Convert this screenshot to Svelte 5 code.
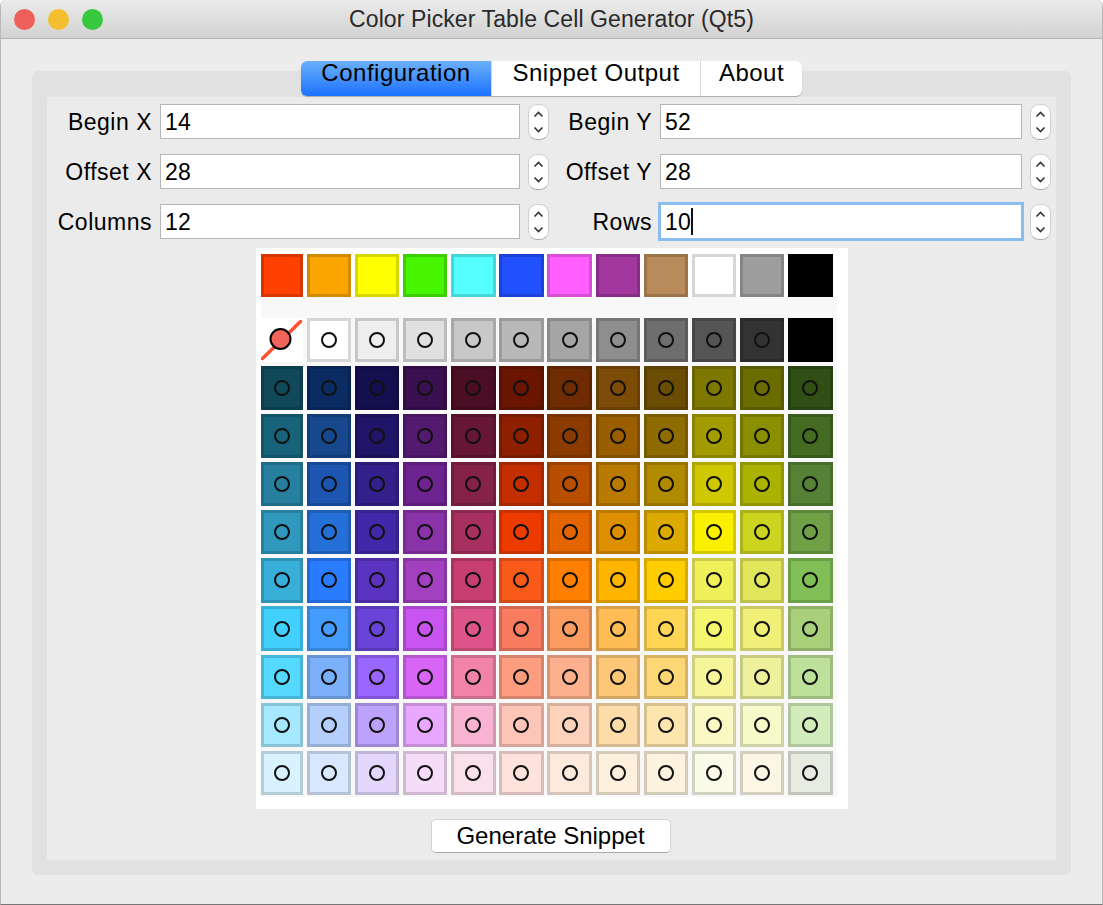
<script>
  const fields = [
    { left: 'Begin X', leftValue: '14', right: 'Begin Y', rightValue: '52' },
    { left: 'Offset X', leftValue: '28', right: 'Offset Y', rightValue: '28' },
    { left: 'Columns', leftValue: '12', right: 'Rows', rightValue: '10', focused: true }
  ];

  const palette = [
    '#ff4000', '#faa500', '#ffff00', '#48f500', '#55ffff', '#2150ff',
    '#ff5fff', '#a1379f', '#b98a5a', '#ffffff', '#9e9e9e', '#000000'
  ];

  const rows = [
    [null, '#ffffff', '#eeeeee', '#e0e0e0', '#c8c8c8', '#b8b8b8', '#a5a5a5', '#8e8e8e', '#6e6e6e', '#555555', '#333333', '#000000'],
    ['#104a5a', '#0b2b63', '#14104f', '#3a1050', '#4b0e25', '#6a1500', '#6e2c00', '#7c4b05', '#6b4c03', '#7e7800', '#6a6c00', '#2f4f15'],
    ['#17647a', '#17488e', '#1f1467', '#531a70', '#671735', '#8e2000', '#8c3b00', '#9a5e00', '#8f6c00', '#a39c00', '#8a8f00', '#436b22'],
    ['#267f9f', '#1d56b0', '#33208a', '#6d2490', '#842248', '#c22e00', '#b84f00', '#b87a00', '#b18a00', '#cfc800', '#acb200', '#568235'],
    ['#3098bc', '#2470d8', '#4128a8', '#8a33a8', '#a8305f', '#ed3b00', '#e46500', '#de8f00', '#dcaa00', '#faf000', '#ccd420', '#70a045'],
    ['#38afd8', '#2a7cff', '#5a33c0', '#a240c0', '#c83e70', '#f95a1a', '#ff7f00', '#ffb400', '#ffcd00', '#f0f05a', '#e2e65a', '#80bf55'],
    ['#42d0ff', '#449cff', '#6a44d8', '#c955f0', '#dd5588', '#fa7c60', '#fb9c60', '#ffbd55', '#ffd555', '#f5f570', '#f0f078', '#a8d07a'],
    ['#55d9ff', '#7cb0fb', '#9966ff', '#d865f5', '#f283a8', '#fc9d80', '#fdb08d', '#fcc878', '#fdd776', '#f6f59a', '#eef09c', '#bde09a'],
    ['#a5e8ff', '#b5cffc', '#bda2fb', '#e8a8ff', '#f8b4d0', '#fdc4b8', '#fdd2bb', '#fddcaa', '#fde6ad', '#fbf8c4', '#f6f9c8', '#d3ecbc'],
    ['#d8f3ff', '#d9e8fe', '#e3d7fd', '#f5dcf8', '#f9e0ea', '#fee2dc', '#fdeadd', '#fdf0dc', '#fdf2dd', '#fafae8', '#fbf7e4', '#e8ece0']
  ];
</script>

{#snippet spinner()}
  <div class="spinner">
    <svg width="11" height="24" viewBox="0 0 11 24" aria-hidden="true">
      <path d="M1.5 6.5 5.5 2.5 9.5 6.5M1.5 17.5 5.5 21.5 9.5 17.5" />
    </svg>
  </div>
{/snippet}

<div class="window">
  <header class="titlebar">
    <div class="lights">
      <span class="light red"></span>
      <span class="light yellow"></span>
      <span class="light green"></span>
    </div>
    <h1>Color Picker Table Cell Generator (Qt5)</h1>
  </header>

  <main class="content">
    <div class="tabs">
      <button class="tab active" type="button">Configuration</button>
      <button class="tab" type="button">Snippet Output</button>
      <button class="tab" type="button">About</button>
    </div>

    <section class="panel">
      <div class="inner">
        <div class="form">
          {#each fields as row}
            <span class="label">{row.left}</span>
            <div class="field"><input type="text" value={row.leftValue} /></div>
            {@render spinner()}
            <span class="label">{row.right}</span>
            <div class="field" class:focused={row.focused}>
              <input type="text" value={row.rightValue} />
              {#if row.focused}<span class="caret"></span>{/if}
            </div>
            {@render spinner()}
          {/each}
        </div>

        <div class="picker">
          <div class="swatches grid">
            {#each palette as color}
              <div class="cell" style="--c: {color}"></div>
            {/each}
          </div>
          <div class="table">
            <div class="grid">
              {#each rows as row}
                {#each row as color}
                  {#if color}
                    <div class="cell" style="--c: {color}">
                      {#if color !== '#000000'}<span class="ring"></span>{/if}
                    </div>
                  {:else}
                    <div class="cell none">
                      <svg width="42" height="44" viewBox="0 0 42 44" aria-hidden="true">
                        <path class="slash" d="M1.5 40.5 39.5 3.5" />
                        <circle class="dot" cx="19.5" cy="21" r="10" />
                      </svg>
                    </div>
                  {/if}
                {/each}
              {/each}
            </div>
          </div>
        </div>

        <button class="generate" type="button">Generate Snippet</button>
      </div>
    </section>
  </main>
</div>

<style>
  :global(body) {
    margin: 0;
    background: #fff;
  }

  .window {
    box-sizing: border-box;
    height: 905px;
    background: #ececec;
    border-left: 1px solid #b8b8b8;
    border-right: 1px solid #b8b8b8;
    border-bottom: 1px solid #777;
    border-radius: 6px 6px 0 0;
    overflow: hidden;
    font-family: "Liberation Sans", Arial, sans-serif;
    color: #000;
  }

  .titlebar {
    position: relative;
    box-sizing: border-box;
    height: 39px;
    background: linear-gradient(#ebebeb, #d2d2d2);
    border-bottom: 1px solid #b4b4b4;
    display: flex;
    align-items: center;
    justify-content: center;
  }

  .titlebar h1 {
    margin: 0;
    font-size: 23px;
    font-weight: 400;
    letter-spacing: 0.1px;
    color: #2a2a2a;
  }

  .lights {
    position: absolute;
    left: 13px;
    top: 9px;
    display: flex;
    gap: 13px;
  }

  .light {
    width: 21px;
    height: 21px;
    border-radius: 50%;
  }

  .red { background: #f0605a; }
  .yellow { background: #f5be2e; }
  .green { background: #38c83e; }

  .content {
    padding: 22px 31px 0;
  }

  .tabs {
    position: relative;
    z-index: 1;
    display: grid;
    grid-template-columns: 190px 209px 102px;
    grid-template-rows: 35px;
    width: 501px;
    height: 35px;
    margin: 0 auto -25px;
    background: #fff;
    border-radius: 6px;
    box-shadow: 0 1px 1px #aaa;
  }

  .tab {
    box-sizing: border-box;
    height: 35px;
    padding: 0 0 12px;
    border: 0;
    border-left: 1px solid #d8d8d8;
    background: transparent;
    font: 24px/23px "Liberation Sans", Arial, sans-serif;
    letter-spacing: 0.5px;
    color: #000;
  }

  .tab.active {
    border-left: 0;
    border-radius: 6px 0 0 6px;
    background: linear-gradient(#6cb0fb, #1b72fd);
  }

  .panel {
    padding: 26px 15px 15px;
    background: #e1e1e1;
    border-radius: 6px;
  }

  .inner {
    display: flex;
    flex-direction: column;
    align-items: center;
    padding: 7px 0;
    background: #ebebeb;
  }

  .form {
    display: grid;
    grid-template-columns: 105px 360px 22px 94px 362px 22px;
    grid-auto-rows: 35px;
    column-gap: 8px;
    row-gap: 15px;
    align-items: center;
    align-self: flex-start;
  }

  .label {
    text-align: right;
    font-size: 23px;
    letter-spacing: 0.5px;
    padding-top: 1px;
  }

  .field {
    position: relative;
    height: 100%;
  }

  .field input {
    box-sizing: border-box;
    display: block;
    width: 100%;
    height: 100%;
    padding: 1px 4px 0;
    border: 1px solid #b7b7b7;
    border-radius: 0;
    outline: none;
    background: #fff;
    font: 23px "Liberation Sans", Arial, sans-serif;
    letter-spacing: 0.3px;
    color: #000;
  }

  .field.focused input {
    border-color: #8abcf0;
    box-shadow: 0 0 0 2px #8abcf0;
  }

  .caret {
    position: absolute;
    left: 31px;
    top: 4px;
    width: 1.5px;
    height: 27px;
    background: #111;
  }

  .spinner {
    box-sizing: border-box;
    display: flex;
    align-items: center;
    justify-content: center;
    width: 21px;
    height: 36px;
    background: #fff;
    border: 1px solid #cfcfcf;
    border-bottom-color: #aaa;
    border-radius: 9px;
  }

  .spinner path {
    fill: none;
    stroke: #333;
    stroke-width: 1.6;
  }

  .picker {
    box-sizing: border-box;
    width: 592px;
    margin: 9px 0 10px;
    padding: 6px 11px 12px 5px;
    background: #fff;
  }

  .grid {
    display: grid;
    grid-template-columns: 42.4px repeat(11, 44.4px);
    grid-auto-rows: 44.2px;
    gap: 3.95px 3.77px;
  }

  .swatches {
    grid-auto-rows: 43px;
  }

  .table {
    padding: 20.7px 0 2.3px;
    background: #f8f8f8;
  }

  .cell {
    box-sizing: border-box;
    display: flex;
    align-items: center;
    justify-content: center;
    background: var(--c);
    border: 3px solid color-mix(in srgb, var(--c) 84%, #000);
  }

  .cell.none {
    background: #fff;
    border: 0;
  }

  .slash {
    fill: none;
    stroke: #ff5030;
    stroke-width: 3.5;
    stroke-linecap: round;
  }

  .dot {
    fill: #f0645a;
    stroke: #000;
    stroke-width: 2;
  }

  .ring {
    box-sizing: border-box;
    width: 16px;
    height: 16px;
    border: 2px solid #111;
    border-radius: 50%;
  }

  .generate {
    box-sizing: border-box;
    width: 240px;
    height: 34px;
    margin-right: 2px;
    padding: 0 0 1px;
    background: #fff;
    border: 1px solid #d4d4d4;
    border-bottom-color: #aaa;
    border-radius: 5px;
    font: 24px "Liberation Sans", Arial, sans-serif;
    color: #000;
  }
</style>
